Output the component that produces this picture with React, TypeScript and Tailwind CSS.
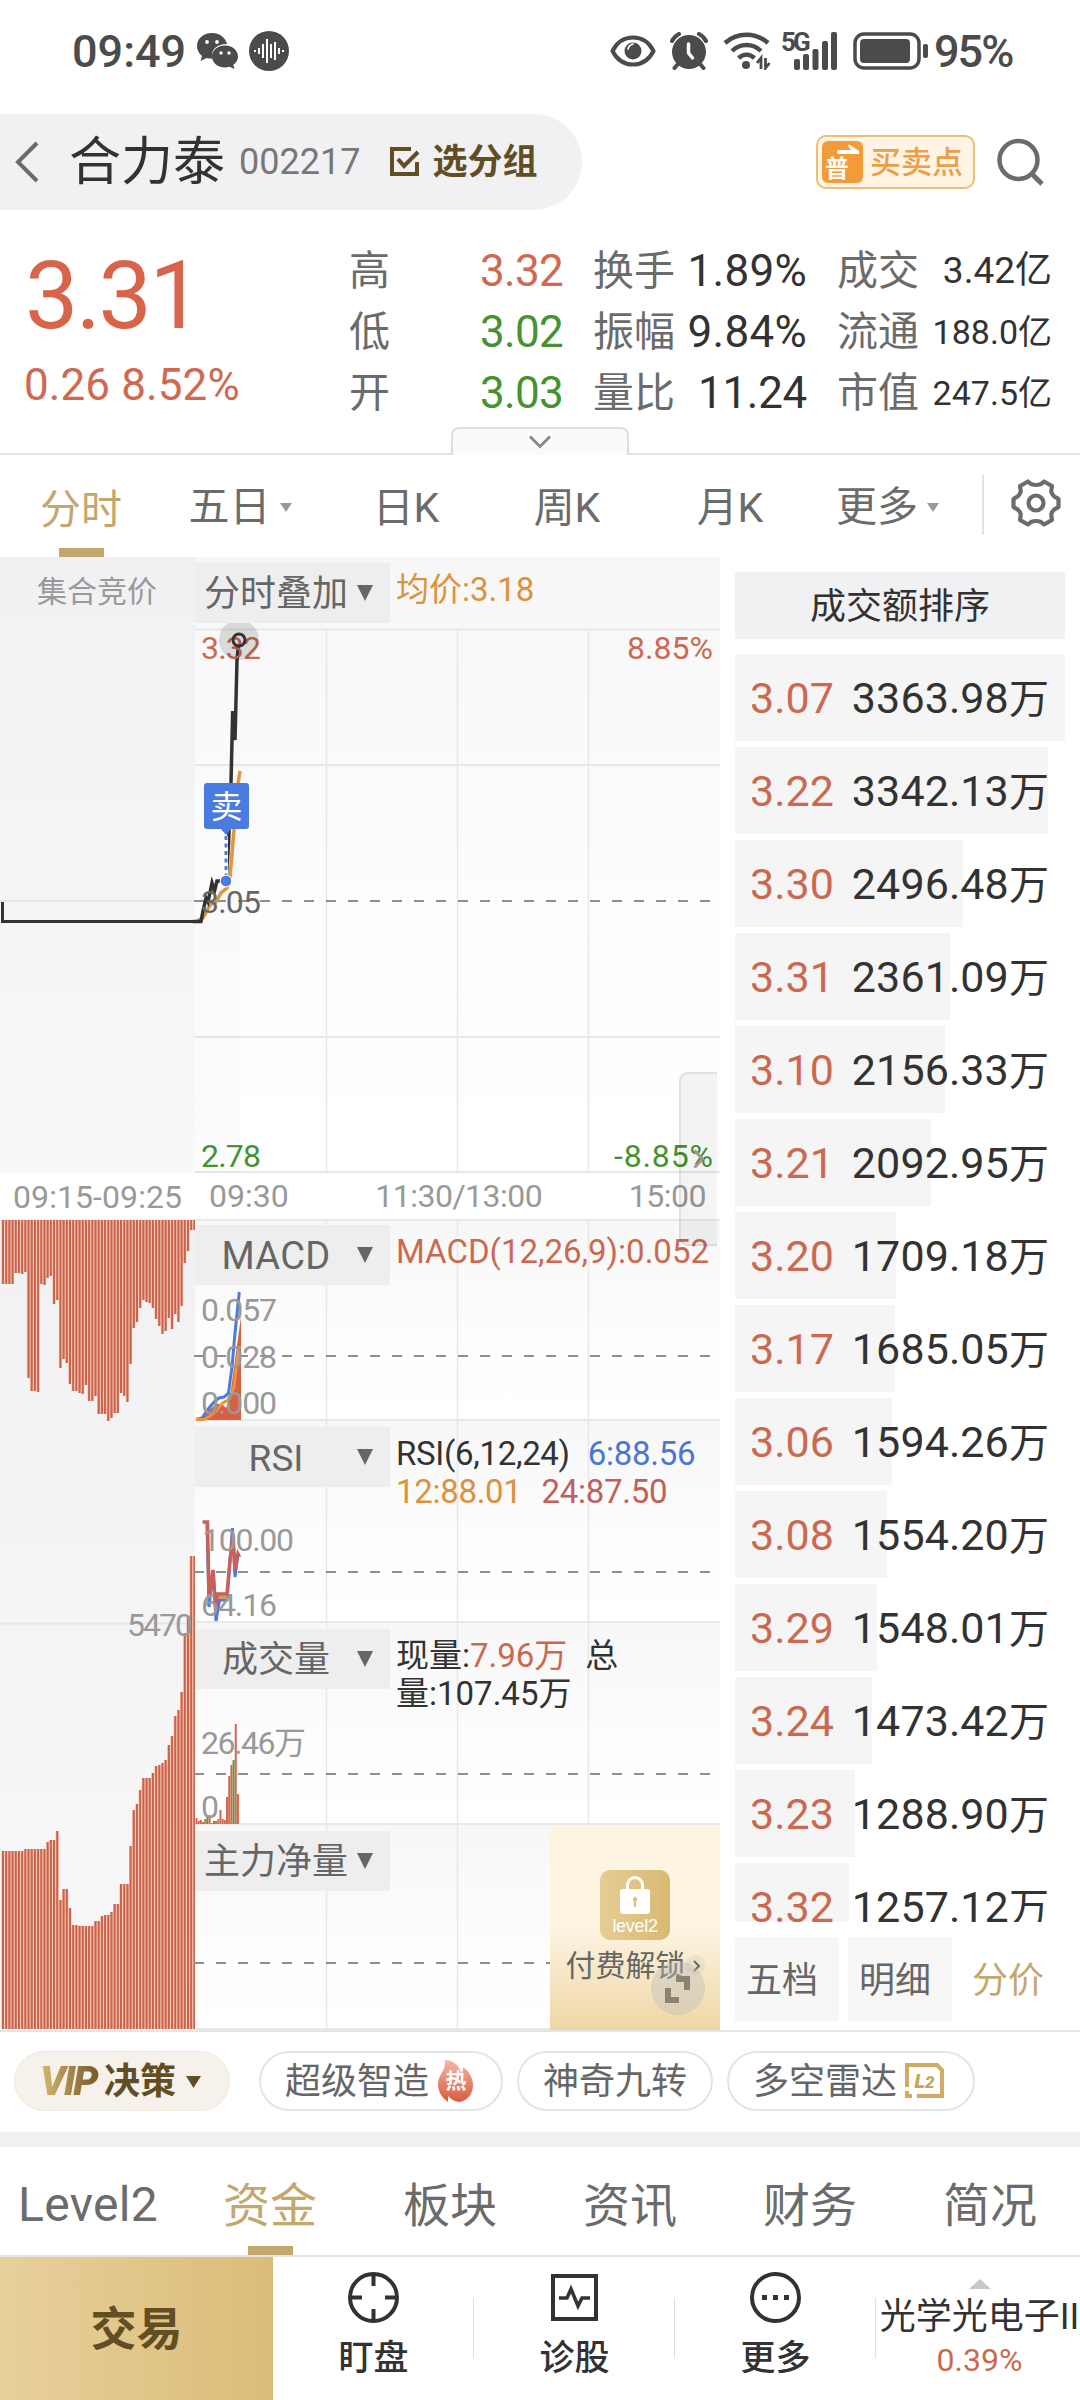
import type { ReactNode } from "react";

const FONT = "font-['Roboto','Noto_Sans_CJK_SC',sans-serif]";

const quoteColumns = [
    {
        width: "w-[214px]",
        rows: [
            { label: "高", value: "3.32", style: "text-[44px] tracking-[-0.7px] text-[#d0694f]" },
            { label: "低", value: "3.02", style: "text-[44px] tracking-[-0.7px] text-[#45922f]" },
            { label: "开", value: "3.03", style: "text-[44px] tracking-[-0.7px] text-[#45922f]" },
        ],
    },
    {
        width: "w-[214px]",
        rows: [
            { label: "换手", value: "1.89%", style: "text-[44px] tracking-[0.3px] text-[#323232]" },
            { label: "振幅", value: "9.84%", style: "text-[44px] tracking-[0.3px] text-[#323232]" },
            { label: "量比", value: "11.24", style: "text-[44px] tracking-[-0.3px] text-[#323232]" },
        ],
    },
    {
        width: "w-[215px]",
        rows: [
            { label: "成交", value: "3.42亿", style: "text-[37px] text-[#323232]" },
            { label: "流通", value: "188.0亿", style: "text-[34px] text-[#323232]" },
            { label: "市值", value: "247.5亿", style: "text-[34px] text-[#323232]" },
        ],
    },
];

const priceRows = [
    { price: "3.07", amount: "3363.98万", bar: 330 },
    { price: "3.22", amount: "3342.13万", bar: 313 },
    { price: "3.30", amount: "2496.48万", bar: 228 },
    { price: "3.31", amount: "2361.09万", bar: 215 },
    { price: "3.10", amount: "2156.33万", bar: 210 },
    { price: "3.21", amount: "2092.95万", bar: 196 },
    { price: "3.20", amount: "1709.18万", bar: 161 },
    { price: "3.17", amount: "1685.05万", bar: 160 },
    { price: "3.06", amount: "1594.26万", bar: 157 },
    { price: "3.08", amount: "1554.20万", bar: 152 },
    { price: "3.29", amount: "1548.01万", bar: 142 },
    { price: "3.24", amount: "1473.42万", bar: 137 },
    { price: "3.23", amount: "1288.90万", bar: 120 },
    { price: "3.32", amount: "1257.12万", bar: 114 },
];

// auction bars: heights from the top edge / from the bottom edge
const auctionTop = [
    64, 64, 64, 64, 53, 53, 54, 52, 158, 171, 171, 172, 64, 65, 58, 56, 84, 80, 148, 139, 143, 164, 171, 171, 173, 174, 165, 181,
    181, 176, 194, 194, 194, 201, 198, 193, 193, 173, 176, 182, 144, 108, 102, 88, 80, 82, 83, 88, 99, 106, 114, 111, 98, 109, 94,
    102, 86, 43, 31, 10, 10,
];
const auctionBottom = [
    178, 178, 178, 178, 178, 178, 178, 180, 180, 180, 180, 180, 180, 180, 187, 189, 189, 198, 129, 140, 140, 121, 104, 104, 103, 103,
    103, 103, 103, 108, 108, 113, 114, 114, 117, 125, 125, 145, 145, 145, 183, 219, 225, 239, 251, 251, 251, 256, 263, 264, 266, 269,
    284, 293, 313, 319, 337, 396, 412, 473, 473,
];

function StatusBar() {
    return (
        <div className="flex h-[114px] items-center justify-between pl-[72px] pr-[65px] pb-[12px] text-[#4b4b4b]">
            <div className="flex items-center">
                <span className="w-[115px] text-[45px] leading-none font-medium">09:49</span>
                <svg className="ml-[10px]" width="42" height="36" viewBox="0 0 42 36" fill="#4b4b4b">
                    <path d="M15 0C6 0 0 6 0 13c0 4 2 7.500 5 10l-1.500 5 6-3c2 .6 4 .8 6 .8C13 17 20 11 30 11 28.500 4.500 22.500 0 15 0z" />
                    <path d="M28 12.500c-7 0-13 4.500-13 11s6 11 13 11c1.600 0 3-.2 4.500-.7l5 2.200-1.300-4c3-2.200 4.800-5 4.800-8.500 0-6.500-6-11-13-11z" />
                    <circle cx="10" cy="9" r="1.900" fill="#fff" />
                    <circle cx="20" cy="9" r="1.900" fill="#fff" />
                    <circle cx="24" cy="20" r="1.700" fill="#fff" />
                    <circle cx="32" cy="20" r="1.700" fill="#fff" />
                </svg>
                <svg className="ml-[10px]" width="40" height="40" viewBox="0 0 40 40">
                    <circle cx="20" cy="20" r="20" fill="#4b4b4b" />
                    <path d="M6 19v2M10 17v6M14 13v14M18 8v24M22 13v14M26 11v18M30 17v6M34 19v2" stroke="#fff" strokeWidth="2" />
                </svg>
            </div>
            <div className="flex items-center">
                <svg width="46" height="32" viewBox="0 0 46 32" fill="none" stroke="#4b4b4b" strokeWidth="4">
                    <path d="M2.500 16C7 7 14 2.500 23 2.500S39 7 43.500 16C39 25 32 29.500 23 29.500S7 25 2.500 16z" />
                    <circle cx="23" cy="16" r="8.500" fill="#4b4b4b" stroke="none" />
                    <path d="M18 14q1-4 5-5" stroke="#fff" strokeWidth="1.800" strokeLinecap="round" />
                </svg>
                <svg className="ml-[14px]" width="38" height="38" viewBox="0 0 38 38">
                    <circle cx="19" cy="20" r="17" fill="#4b4b4b" />
                    <path d="M2 9c1.500-3 4-5.500 7-7M36 9c-1.500-3-4-5.500-7-7M8 32l-3.500 4M30 32l3.500 4" stroke="#4b4b4b" strokeWidth="4" strokeLinecap="round" />
                    <path d="M18.500 12v9l4 5" stroke="#fff" strokeWidth="3.500" fill="none" strokeLinecap="round" />
                </svg>
                <svg className="ml-[15px]" width="48" height="38" viewBox="0 0 48 38" fill="none" stroke="#4b4b4b" strokeWidth="4.500">
                    <path d="M2 11c12-11 31-11 43 0M9 19c8-8 21-8 29 0M15.500 26c5-4.500 11-4.500 16 0" />
                    <circle cx="23" cy="33" r="4" fill="#4b4b4b" stroke="none" />
                    <path d="M38 37V26l-4 5M42.500 26v10l4-5" strokeWidth="2.800" />
                </svg>
                <div className="relative ml-[10px] h-[38px] w-[58px]">
                    <span className="absolute left-0 top-0 text-[26px] leading-[20px] font-bold tracking-[-3px]">5G</span>
                    <svg width="58" height="38" viewBox="0 0 58 38" fill="#4b4b4b">
                        <rect x="13" y="27" width="6" height="11" rx="2" />
                        <rect x="22" y="22" width="6" height="16" rx="2" />
                        <rect x="31.500" y="17" width="6" height="21" rx="2" />
                        <rect x="41" y="9" width="6" height="29" rx="2" />
                        <rect x="50" y="0" width="6" height="38" rx="2" />
                    </svg>
                </div>
                <svg className="ml-[14px]" width="76" height="38" viewBox="0 0 76 38">
                    <rect x="2" y="2" width="64" height="34" rx="9" fill="none" stroke="#4b4b4b" strokeWidth="3.500" />
                    <rect x="7" y="7" width="50" height="24" rx="4" fill="#4b4b4b" />
                    <rect x="70" y="12" width="5" height="14" rx="2" fill="#4b4b4b" />
                </svg>
                <span className="ml-[5px] w-[81px] whitespace-nowrap text-[45px] leading-none font-medium tracking-[-2px]">95%</span>
            </div>
        </div>
    );
}

function Header() {
    return (
        <div className="flex h-[96px] items-center justify-between pr-[35px]">
            <div className="flex h-[96px] w-[582px] items-center rounded-r-full bg-[#f1f1f4] pl-[14px]">
                <svg width="26" height="42" viewBox="0 0 26 42" fill="none" stroke="#6b6b6b" strokeWidth="4">
                    <path d="M23 2L4 21l19 19" />
                </svg>
                <span className="ml-[29px] pt-[2px] text-[52px] leading-none text-[#323232]">合力泰</span>
                <span className="ml-[14px] text-[36px] leading-none text-[#777]">002217</span>
                <svg className="ml-[29px]" width="32" height="32" viewBox="0 0 32 32" fill="none" stroke="#614e23" strokeWidth="4">
                    <path d="M22 3H3v25h25V16" />
                    <path d="M9 13l6 7L29 6" />
                </svg>
                <span className="ml-[11px] pt-px text-[35px] leading-none font-bold text-[#614e23]">选分组</span>
            </div>
            <div className="flex items-center">
                <div className="flex h-[54px] w-[159px] items-center rounded-[10px] border-2 border-[#e9c078] bg-[#fff3e4] pl-[4px]">
                    <div className="relative flex h-[42px] w-[41px] items-end rounded-[6px] bg-[#f29b38] pl-[3px]">
                        <span className="text-[24px] leading-[27px] font-bold text-white">普</span>
                        <svg className="absolute left-[14px] top-[3px]" width="24" height="10" viewBox="0 0 24 10" fill="#fff">
                            <path d="M2 6h13l-3-4q0-2 2-1l9 6q1 3-1 3H2q-2-2 0-4z" />
                        </svg>
                    </div>
                    <span className="ml-[7px] text-[31px] leading-none font-medium text-[#e9a04a]">买卖点</span>
                </div>
                <svg className="ml-[22px]" width="48" height="48" viewBox="0 0 48 48" fill="none" stroke="#6b6b6b" strokeWidth="4.500">
                    <circle cx="21.500" cy="22" r="19" />
                    <path d="M34 35l11 11" strokeWidth="5" />
                </svg>
            </div>
        </div>
    );
}

function Quote() {
    return (
        <div className="relative flex h-[245px] border-b-2 border-[#e4e4e4] pt-[30px]">
            <div className="w-[349px] shrink-0 pl-[25px] text-[#d8654a]">
                <div className="mt-[8px] text-[95px] leading-[96px] tracking-[-2.500px]">3.31</div>
                <div className="-ml-px mt-[15px] whitespace-nowrap text-[44px] leading-[52px] tracking-[0.1px] text-[#d0694f]">0.26 8.52%</div>
            </div>
            <div className="flex gap-[30px]">
                {quoteColumns.map((col) => (
                    <div key={col.rows[0].label} className={col.width}>
                        {col.rows.map((row) => (
                            <div key={row.label} className="flex h-[61px] items-center justify-between">
                                <span className="pt-px text-[41px] leading-none text-[#6b6b6b]">{row.label}</span>
                                <span className={`leading-none ${row.style}`}>{row.value}</span>
                            </div>
                        ))}
                    </div>
                ))}
            </div>
            <div className="absolute bottom-[-2px] left-[451px] flex h-[28px] w-[178px] items-center justify-center rounded-t-[8px] border-2 border-b-0 border-[#dedede] bg-[#fafafa]">
                <svg width="22" height="14" viewBox="0 0 22 14" fill="none" stroke="#8a8a8a" strokeWidth="3">
                    <path d="M1 1.500l10 10 10-10" />
                </svg>
            </div>
        </div>
    );
}

function SmallCaret() {
    return (
        <svg className="ml-[9px]" width="12" height="9" viewBox="0 0 12 9">
            <path d="M0 0h12L6 9z" fill="#999" />
        </svg>
    );
}

function PeriodTabs() {
    return (
        <div className="flex h-[102px] text-[41px] leading-none text-[#6b6b6b]">
            <div className="flex w-[162px] flex-col items-center justify-end text-[#c4a76c]">
                <span className="mb-[17px]">分时</span>
                <span className="h-[9px] w-[45px] bg-[#c4a76c]" />
            </div>
            <div className="flex w-[158px] items-center justify-center pt-[3px] pr-[2px]">五日<SmallCaret /></div>
            <div className="flex w-[172px] items-center justify-center pt-[4px]">日K</div>
            <div className="flex w-[150px] items-center justify-center pt-[4px]">周K</div>
            <div className="flex w-[176px] items-center justify-center pt-[4px]">月K</div>
            <div className="flex w-[164px] items-center justify-end pt-[3px] pr-[43px]">更多<SmallCaret /></div>
            <div className="mt-[20px] h-[60px] w-[2px] bg-[#e2e2e2]" />
            <svg className="ml-[27px] mt-[23px]" width="50" height="50" viewBox="0 0 50 50" fill="none" stroke="#6b6b6b" strokeWidth="4.200" strokeLinejoin="round">
                <path d="M17 3.500l3 2.500q5 2 10 0l3-2.500 8 4.500-.8 5.500q1.500 5 5.800 6.500l1.500 1v8l-1.500 1q-4.300 1.500-5.800 6.500l.8 5.500-8 4.500-3-2.500q-5-2-10 0l-3 2.500-8-4.500.8-5.500q-1.500-5-5.800-6.500l-1.500-1v-8l1.500-1q4.300-1.500 5.800-6.500L9 8z" />
                <circle cx="25" cy="25" r="7.500" />
            </svg>
        </div>
    );
}

function Bars({ y, data, up }: { y: number; data: number[]; up?: boolean }) {
    return (
        <g>
            {data.map((h, i) => (
                <g key={i}>
                    <rect x={1.4 + i * 3.19} y={up ? y - h : y} width={3.1} height={h} fill="#f6bcab" />
                    <rect x={2 + i * 3.19} y={up ? y - h : y} width={2} height={h} fill="#c96349" />
                </g>
            ))}
        </g>
    );
}

function AuctionColumn() {
    return (
        <div className="relative w-[195px] shrink-0">
            <svg className="absolute inset-0" width="195" height="1473" viewBox="0 557 195 1473">
                <defs>
                    <linearGradient id="auction" x1="0" y1="0" x2="0" y2="1">
                        <stop offset="0" stopColor="#f1f1f4" />
                        <stop offset="1" stopColor="#f8f8f8" />
                    </linearGradient>
                </defs>
                <rect x="0" y="557" width="195" height="616" fill="url(#auction)" />
                <rect x="0" y="1219" width="195" height="811" fill="url(#auction)" />
                <path d="M0 901h195M0 1623.500h195" stroke="#e6e6e6" strokeWidth="2" />
                <path d="M2.500 902v19.500H195" stroke="#323232" strokeWidth="3" fill="none" />
                <Bars y={1220} data={auctionTop} />
                <Bars y={2029} data={auctionBottom} up />
                <text x="97" y="602" textAnchor="middle" fontSize="30" fill="#999">集合竞价</text>
                <text x="13" y="1208" fontSize="32" fill="#999" textLength="169">09:15-09:25</text>
                <text x="127" y="1636" fontSize="32" fill="#999" textLength="66">5470</text>
            </svg>
        </div>
    );
}

function Selector({ children }: { children: ReactNode }) {
    return (
        <div className="mt-[6px] flex h-[60px] w-[195px] shrink-0 items-center bg-[#eeeeee] pl-[8px] text-[36px] leading-none text-[#666]">
            <span className="w-[146px] whitespace-nowrap pt-[2px] text-center">{children}</span>
            <svg className="ml-[8px]" width="16" height="16" viewBox="0 0 16 16">
                <path d="M0 0h16L8 16z" fill="#666" />
            </svg>
        </div>
    );
}

const dash = { stroke: "#8f8f8f", strokeWidth: 2, strokeDasharray: "10 12" };

function PanelGrid({ id, top, bottom, first, children }: { id: string; top: number; bottom: number; first?: number; children?: ReactNode }) {
    return (
        <svg className="absolute inset-0 overflow-visible" width="525" height={bottom - top} viewBox={`195 ${top} 525 ${bottom - top}`}>
            <defs>
                <linearGradient id={id} x1="0" y1="0" x2="0" y2="1">
                    <stop offset="0" stopColor="#f7f7f7" />
                    <stop offset=".6" stopColor="#fdfdfd" />
                    <stop offset="1" stopColor="#ffffff" />
                </linearGradient>
            </defs>
            <rect x="195" y={top} width="525" height={bottom - top} fill={`url(#${id})`} />
            <path d={`M326.500 ${first ?? top}V${bottom}M457.500 ${first ?? top}V${bottom}M588.500 ${first ?? top}V${bottom}`} stroke="#e8e8e8" strokeWidth="1.500" />
            <path d={`M195 ${bottom - 1}H720`} stroke="#e8e8e8" strokeWidth="2" />
            {children}
        </svg>
    );
}

function IndicatorHead({ label, children }: { label: ReactNode; children?: ReactNode }) {
    return (
        <div className="relative flex items-start">
            <Selector>{label}</Selector>
            <div className="ml-[6px] mt-[14px] w-[323px] text-[33px] leading-[38px] text-[#323232]">{children}</div>
        </div>
    );
}

function PricePanel() {
    return (
        <div className="relative flex h-[616px]">
            <PanelGrid id="p0" top={557} bottom={1173} first={629}>
                <path d="M195 629.500H720M195 765H720M195 1037H720" stroke="#e8e8e8" strokeWidth="2" />
                <path d="M195 921L206 896L226 881L232 711L240 640V1173H195z" fill="#000" fillOpacity=".012" />
                <path d="M194 901H712" {...dash} />
                <path d="M197 921L203 918L210 905L216 902L221 893L227 888L230 877L234 830L237 790L240 771" stroke="#e0953f" strokeWidth="3.500" fill="none" />
                <path d="M193 921.500H201L203 911L206 898L208 902L212 883L214.500 891L217 881L226 881L228.500 845L231 783L232.700 711L235 740L237 660L238.500 645" stroke="#323232" strokeWidth="3.500" fill="none" />
                <path d="M233.500 711v29" stroke="#323232" strokeWidth="4.500" />
                <g fontSize="32">
                    <text x="201" y="659" fill="#cb6950" textLength="60">3.32</text>
                    <text x="713" y="659" fill="#cb6950" textAnchor="end" textLength="86">8.85%</text>
                    <text x="201" y="913" fill="#666" textLength="60">3.05</text>
                    <text x="201" y="1167" fill="#45922f" textLength="60">2.78</text>
                    <text x="713" y="1167" fill="#45922f" textAnchor="end" textLength="99">-8.85%</text>
                </g>
                <circle cx="239" cy="640" r="20" fill="#000" fillOpacity=".12" />
                <circle cx="239" cy="640" r="6" fill="none" stroke="#323232" strokeWidth="3" />
                <path d="M226 836v40" stroke="#fff" strokeWidth="4" />
                <path d="M226 836v40" stroke="#4a7be0" strokeWidth="3" strokeDasharray="4 3.500" />
                <circle cx="226" cy="881" r="5.800" fill="#4a7be0" stroke="#fff" strokeWidth="1" />
                <path d="M207 783h39q3 0 3 3v40q0 3-3 3h-15l-5 6-5-6h-14q-3 0-3-3v-40q0-3 3-3z" fill="#4a7be0" />
                <text x="226.500" y="818" textAnchor="middle" fontSize="32" fill="#fff">卖</text>
            </PanelGrid>
            <IndicatorHead label="分时叠加">
                <span className="text-[#dd913b]">均价:3.18</span>
            </IndicatorHead>
        </div>
    );
}

function MacdPanel() {
    return (
        <div className="relative flex h-[202px]">
            <PanelGrid id="p1" top={1219} bottom={1421}>
                <path d="M195 1220H720" stroke="#e8e8e8" strokeWidth="2" />
                <path d="M194 1356H712" {...dash} />
                <path d="M200 1420L209 1410L216 1404L222 1404L226 1408L230 1397L234 1367L241 1317V1420z" fill="#d95f41" />
                <path d="M196 1419.500L202 1418L209 1408L214 1402L219 1398L224 1397L228.500 1393L232 1367L235 1333L239.300 1292" stroke="#4a7be0" strokeWidth="3" fill="none" />
                <path d="M196 1419.500H204L210 1416L216 1411L222.700 1403L229.600 1399L234 1387L237.500 1357L239.500 1346" stroke="#eb943c" strokeWidth="3" fill="none" />
                <g fontSize="32" fill="#999">
                    <text x="201" y="1321" textLength="76">0.057</text>
                    <text x="201" y="1368" textLength="76">0.028</text>
                    <text x="201" y="1414" textLength="76">0.000</text>
                </g>
            </PanelGrid>
            <IndicatorHead label={<span className="text-[38px] tracking-[0.3px]">MACD</span>}>
                <span className="whitespace-nowrap text-[#cb6950]">MACD(12,26,9):0.052</span>
            </IndicatorHead>
        </div>
    );
}

function RsiPanel() {
    return (
        <div className="relative flex h-[202px]">
            <PanelGrid id="p2" top={1421} bottom={1623}>
                <path d="M194 1572H712" {...dash} />
                <path d="M207 1523L209 1607L213 1570L216 1621L219.500 1600H227L232.500 1528L235 1577L238 1553" stroke="#4a7be0" strokeWidth="3" fill="none" />
                <path d="M216 1597h11" stroke="#e0953f" strokeWidth="3" />
                <path d="M202.500 1522H207.500L209 1597L213 1570L216 1612L217 1594H227L230 1560L233 1535L235 1570L238 1554L239.500 1557" stroke="#c9605a" strokeWidth="3.500" fill="none" />
                <g fontSize="32" fill="#999">
                    <text x="202" y="1551" textLength="92">100.00</text>
                    <text x="201" y="1616" textLength="76">64.16</text>
                </g>
            </PanelGrid>
            <IndicatorHead label={<span className="text-[37px]">RSI</span>}>
                <div className="whitespace-nowrap tracking-[-0.3px]">RSI(6,12,24)<span className="ml-[18px] text-[#4a77d4]">6:88.56</span></div>
                <div className="whitespace-nowrap tracking-[-0.3px] text-[#dd913b]">12:88.01<span className="ml-[20px] text-[#c0605a]">24:87.50</span></div>
            </IndicatorHead>
        </div>
    );
}

const volumes = [6, 3, 4, 2, 5, 7, 9, 1, 3, 3, 5, 14, 5, 4, 27, 48, 59, 64, 100, 30];
const greenVolumes = [5, 8, 17];

function VolumePanel() {
    return (
        <div className="relative flex h-[202px]">
            <PanelGrid id="p3" top={1623} bottom={1825}>
                <path d="M194 1774H712" {...dash} />
                {volumes.map((h, i) => (
                    <rect key={i} x={195.500 + i * 2.18} y={1824 - h} width="2" height={h} fill={greenVolumes.includes(i) ? "#5a9636" : "#d2694f"} />
                ))}
                <g fontSize="32" fill="#999">
                    <text x="201" y="1754" textLength="105">26.46万</text>
                    <text x="201" y="1818">0</text>
                </g>
            </PanelGrid>
            <IndicatorHead label="成交量">
                <div>现量:<span className="text-[#cb6950]">7.96万</span><span className="ml-[18px]">总</span></div>
                <div>量:107.45万</div>
            </IndicatorHead>
        </div>
    );
}

function MainForcePanel() {
    return (
        <div className="relative flex h-[205px] justify-between">
            <PanelGrid id="p4" top={1825} bottom={2030}>
                <path d="M194 1963H550" {...dash} />
            </PanelGrid>
            <IndicatorHead label="主力净量" />
            <div className="absolute right-0 top-0 flex h-[205px] w-[170px] flex-col items-center bg-linear-to-b from-[#fdf4e2] via-[#fdf4e2] to-[#efd7a4] pt-[45px]">
                <div className="flex h-[70px] w-[70px] flex-col items-center rounded-[10px] bg-linear-to-r from-[#e6cd95] to-[#d9b972] pt-[6px]">
                    <svg width="30" height="38" viewBox="0 0 30 38">
                        <path d="M7.500 15V9a7.500 7.500 0 0115 0v6" fill="none" stroke="#fff" strokeWidth="3" />
                        <rect x="0" y="13" width="30" height="25" rx="3" fill="#fff" />
                        <path d="M15 21a2.500 2.500 0 011.200 4.500V31h-2.400v-5.500A2.500 2.500 0 0115 21z" fill="#dfc081" />
                    </svg>
                    <span className="mt-[2px] font-['Liberation_Sans'] text-[18px] leading-[20px] tracking-[-0.3px] text-white">level2</span>
                </div>
                <div className="mt-[9px] flex items-center pr-[4px] text-[30px] leading-[34px] text-[#666]">
                    付费解锁
                    <svg className="ml-[7px]" width="8" height="12" viewBox="0 0 8 12" fill="none" stroke="#555" strokeWidth="2">
                        <path d="M1 1l5 5-5 5" />
                    </svg>
                </div>
            </div>
            <svg className="absolute bottom-[15px] right-[15px]" width="54" height="60" viewBox="0 0 54 60">
                <circle cx="44" cy="10" r="10" fill="#bbb" fillOpacity=".2" />
                <circle cx="27" cy="33" r="27" fill="#bbb" fillOpacity=".4" />
                <path d="M25 24h11v11M28 45H17V33" stroke="#8b8372" strokeWidth="6" fill="none" />
            </svg>
        </div>
    );
}

function ChartArea() {
    return (
        <div className="relative w-[525px] shrink-0">
            <PricePanel />
            <div className="relative flex h-[46px] items-center justify-between pl-[14px] pr-[14px] text-[32px] leading-none text-[#999]">
                <span>09:30</span>
                <span className="tracking-[-0.5px]">11:30/13:00</span>
                <span className="tracking-[-0.5px]">15:00</span>
            </div>
            <MacdPanel />
            <RsiPanel />
            <VolumePanel />
            <MainForcePanel />
            <div className="absolute right-[3px] top-[515px] flex h-[174px] w-[38px] items-center justify-center rounded-l-[9px] border-2 border-r-0 border-[#00000014] bg-[#0000000b]">
                <svg width="12" height="20" viewBox="0 0 12 20" fill="none" stroke="#999" strokeWidth="3">
                    <path d="M1.500 1.500L9.500 10l-8 8.500" />
                </svg>
            </div>
        </div>
    );
}

function PriceList() {
    return (
        <div className="ml-[15px] flex h-[1473px] w-[330px] flex-col pt-[15px]">
            <div className="flex h-[67px] items-center justify-center bg-[#f1f1f4] pt-[2px] text-[36px] leading-none text-[#323232]">成交额排序</div>
            <div className="mt-[15px] h-[1268px] overflow-hidden">
                {priceRows.map((row) => (
                    <div key={row.price} className="mb-[6px] h-[87px]">
                        <div className="h-[87px] bg-[#f5f5f5]" style={{ width: row.bar }}>
                            <div className="flex h-[87px] w-[330px] items-center justify-between pt-[2px] pl-[15px] pr-[16px] text-[43px] leading-none text-[#323232]">
                                <span className="text-[#cb6950]">{row.price}</span>
                                <span className="tracking-[0.1px]">{row.amount.slice(0, -1)}<span className="text-[40px]">万</span></span>
                            </div>
                        </div>
                    </div>
                ))}
            </div>
            <div className="mt-[15px] flex gap-[9px] text-[36px] leading-none text-[#666]">
                <div className="flex h-[84px] w-[104px] items-center bg-[#f7f7f7] pt-[3px] pl-[11px]">五档</div>
                <div className="flex h-[84px] w-[104px] items-center bg-[#f7f7f7] pt-[3px] pl-[11px]">明细</div>
                <div className="flex h-[84px] w-[104px] items-center pt-[3px] pl-[11px] text-[#c4a76c]">分价</div>
            </div>
        </div>
    );
}

function Chips() {
    const chip = "flex h-[60px] items-center rounded-full border-2 border-[#e4e4e4] pt-[2px] pl-[24px] text-[36px] leading-none text-[#666]";
    return (
        <div className="flex h-[102px] items-start border-t-2 border-[#e4e4e4] pt-[19px] pl-[14px]">
            <div className="flex h-[60px] w-[216px] items-center rounded-full border border-[#f1e9dc] bg-[#f6f1ea] pt-[2px] pl-[25px] text-[36px] leading-none font-bold text-[#614e23]">
                <span className="w-[64px] bg-linear-to-r from-[#d9b972] to-[#6b5220] bg-clip-text text-[40px] italic font-black tracking-[-2px] text-transparent">VIP</span>
                决策
                <svg className="ml-[10px]" width="15" height="12" viewBox="0 0 15 12">
                    <path d="M0 0h15L7.500 12z" fill="#614e23" />
                </svg>
            </div>
            <div className={`${chip} ml-[29px] w-[244px]`}>
                超级智造
                <span className="relative -mt-[2px] ml-[8px] flex h-[44px] w-[38px] items-center justify-center">
                    <svg className="absolute inset-0" width="38" height="44" viewBox="0 0 38 44">
                        <defs>
                            <linearGradient id="flame" x1="0" y1="0" x2="0" y2="1">
                                <stop offset="0" stopColor="#f3b8a4" />
                                <stop offset="1" stopColor="#dc5a3e" />
                            </linearGradient>
                        </defs>
                        <path d="M8 1c7 0 14 4 16 13 2-1 2-4 2-6 6 4 10 11 10 18 0 9-5 15-13 17-5 0-9-3-12-6v6C4 38 1 32 1 25 1 16 9 12 8 1z" fill="url(#flame)" />
                    </svg>
                    <span className="relative text-[21px] leading-none font-bold text-white">热</span>
                </span>
            </div>
            <div className={`${chip} ml-[14px] w-[196px]`}>神奇九转</div>
            <div className={`${chip} ml-[14px] w-[248px]`}>
                多空雷达
                <span className="relative -mt-[2px] ml-[8px] flex h-[36px] w-[39px] items-center justify-center">
                    <svg className="absolute inset-0" width="39" height="36" viewBox="0 0 39 36" fill="none" stroke="#cfab63" strokeWidth="4">
                        <path d="M2 24V2h30l5 5v26H12M2 28v7M2 33h5" />
                    </svg>
                    <span className="relative text-[20px] italic font-black leading-none text-[#c9a55c]">L<span className="text-[17px]">2</span></span>
                </span>
            </div>
        </div>
    );
}

function InfoTabs() {
    const tabs = ["Level2", "资金", "板块", "资讯", "财务", "简况"];
    return (
        <div className="box-content grid h-[108px] grid-cols-6 border-t-[15px] border-b-2 border-t-[#f1f1f4] border-b-[#e4e4e4] text-[47px] leading-none text-[#6b6b6b]">
            {tabs.map((tab) => (
                <div key={tab} className={`flex flex-col items-center justify-end ${tab === "资金" ? "text-[#c4a76c]" : ""}`}>
                    <span className={`mb-[17px] ${tab === "Level2" ? "mr-[4px] text-[48px] tracking-[0.3px]" : ""}`}>{tab}</span>
                    <span className={`h-[9px] w-[45px] ${tab === "资金" ? "bg-[#c4a76c]" : ""}`} />
                </div>
            ))}
        </div>
    );
}

function BottomItem({ label, children }: { label: string; children: ReactNode }) {
    return (
        <div className="relative flex w-[201px] flex-col items-center pt-[14px] text-[35px] leading-none font-medium text-[#323232]">
            <svg width="53" height="53" viewBox="0 0 53 53" fill="none" stroke="#323232" strokeWidth="4">
                {children}
            </svg>
            <span className="mt-[17px]">{label}</span>
            <span className="absolute right-0 top-[41px] h-[60px] w-px bg-[#e0e0e0]" />
        </div>
    );
}

function BottomBar() {
    return (
        <div className="flex h-[143px] overflow-hidden">
            <div className="flex w-[273px] shrink-0 items-center justify-center bg-linear-to-r from-[#e8d09c] to-[#dbbc78] text-[46px] leading-none font-bold text-[#614e23]">交易</div>
            <div className="flex shrink-0">
                <BottomItem label="盯盘">
                    <circle cx="26.500" cy="26.500" r="23.500" />
                    <path d="M26.500 3v12M26.500 38v12M3 26.500h12M38 26.500h12" />
                </BottomItem>
                <BottomItem label="诊股">
                    <rect x="5" y="5" width="43" height="43" />
                    <path d="M11 27h8l4-9 7 17 4-8h8" strokeWidth="3.500" />
                </BottomItem>
                <BottomItem label="更多">
                    <circle cx="26.500" cy="26.500" r="23.500" />
                    <path d="M13 26.500h5M24 26.500h5M35 26.500h5" strokeWidth="5" />
                </BottomItem>
            </div>
            <div className="flex w-[204px] flex-col items-center pt-[22px] pl-[3px]">
                <svg width="22" height="10" viewBox="0 0 22 10">
                    <path d="M11 0l11 10H0z" fill="#c9c9c9" />
                </svg>
                <span className="mt-[9px] whitespace-nowrap text-[36px] leading-[38px] text-[#323232]">光学光电子II</span>
                <span className="mt-[7px] text-[32px] leading-[34px] text-[#cb6950]">0.39%</span>
            </div>
        </div>
    );
}

export default function App() {
    return (
        <div className={`h-[2400px] w-[1080px] overflow-hidden bg-white ${FONT}`}>
            <StatusBar />
            <Header />
            <Quote />
            <PeriodTabs />
            <div className="flex h-[1473px]">
                <AuctionColumn />
                <ChartArea />
                <PriceList />
            </div>
            <Chips />
            <InfoTabs />
            <BottomBar />
        </div>
    );
}
